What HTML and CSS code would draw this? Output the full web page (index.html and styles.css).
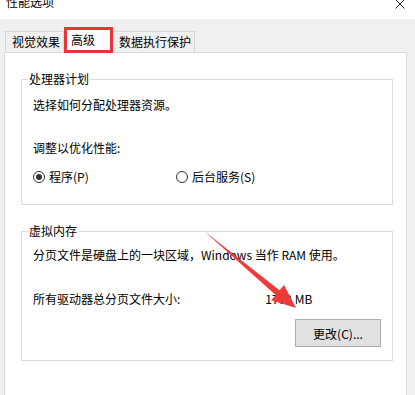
FILE: index.html
```html
<!DOCTYPE html>
<html lang="zh-CN">
<head>
  <meta charset="UTF-8" />
  <title>性能选项</title>
  <link rel="stylesheet" href="styles.css">
</head>
<body>
  <div class="titlebar">
    <span class="title">性能选项</span>
    <svg class="close" width="10" height="10" viewBox="0 0 10 10">
      <path d="M0.5 0.5 L9.5 9.5 M9.5 0.5 L0.5 9.5" stroke="#222" stroke-width="1" fill="none"/>
    </svg>
  </div>

  <div class="tabs">
    <div class="tab">视觉效果</div>
    <div class="tab active">高级</div>
    <div class="tab">数据执行保护</div>
  </div>

  <div class="panel">
    <fieldset class="group">
      <legend>处理器计划</legend>
      <p class="line first">选择如何分配处理器资源。</p>
      <p class="line second">调整以优化性能:</p>
      <div class="radios">
        <label class="radio checked"><span class="dot"></span>程序(P)</label>
        <label class="radio"><span class="dot"></span>后台服务(S)</label>
      </div>
    </fieldset>

    <fieldset class="group vm">
      <legend>虚拟内存</legend>
      <p class="line first">分页文件是硬盘上的一块区域，Windows 当作 RAM 使用。</p>
      <div class="line size-row">
        <span>所有驱动器总分页文件大小:</span>
        <span class="size">1792 MB</span>
      </div>
      <div class="actions">
        <button class="btn">更改(C)...</button>
      </div>
    </fieldset>
  </div>

  <!-- annotation arrow drawn over the dialog -->
  <svg class="arrow" width="415" height="395" viewBox="0 0 415 395">
    <polygon points="204,231 279.5,290.3 284,284.9 296,308 271.2,300.3 275.7,294.9" fill="#f03a3a"/>
  </svg>
</body>
</html>
```

FILE: styles.css
```css
body {
  margin: 0;
  background: #f0f0f0;
  font-family: "Noto Sans CJK SC", "Noto Sans", sans-serif;
  font-size: 12px;
  color: #000;
  width: 415px;
  height: 395px;
  overflow: hidden;
  position: relative;
}

.titlebar {
  height: 19px;
  background: #fff;
  position: relative;
  overflow: hidden;
}

.title {
  display: block;
  margin: -6px 0 0 6px;
  line-height: 16px;
}

.close {
  position: absolute;
  top: -1px;
  right: 10px;
}

.tabs {
  display: flex;
  margin-top: 11px;
  padding-left: 5px;
  height: 22px;
  align-items: flex-end;
}

.tab {
  height: 21px;
  line-height: 20px;
  padding: 0 3px 0 6px;
  border: 1px solid #d9d9d9;
  border-bottom: none;
  background: #f0f0f0;
  box-sizing: border-box;
}

.tab.active {
  height: 26px;
  margin: 0 -1px 0 0;
  padding: 0 15px 0 4px;
  background: #fff;
  border: 3px solid #e8353a;
  line-height: 20px;
  position: relative;
  top: 1px;
  z-index: 1;
}

.panel {
  margin: 0 8px 0 4px;
  height: 360px;
  background: #fff;
  border: 1px solid #d9d9d9;
  box-sizing: border-box;
  padding: 18px 13px 0 16px;
}

.group {
  margin: 0;
  padding: 0 11px 19px 11px;
  border: 1px solid #dcdcdc;
}

.group legend {
  margin-left: -5px;
  padding: 0 1px;
  line-height: 16px;
}

.group.vm {
  margin-top: 18px;
  padding-bottom: 13px;
}

.line {
  margin: 0;
  line-height: 16px;
  white-space: nowrap;
}

.line.first {
  margin-top: 10px;
}

.vm .line.first {
  margin-top: 8px;
}

.line.second {
  margin-top: 27px;
}

.radios {
  display: flex;
  margin-top: 13px;
  line-height: 16px;
}

.radio {
  display: flex;
  align-items: center;
  width: 143px;
}

.dot {
  width: 12px;
  height: 12px;
  border: 1px solid #333;
  border-radius: 50%;
  box-sizing: border-box;
  margin-right: 4px;
  position: relative;
}

.radio.checked .dot::after {
  content: "";
  position: absolute;
  left: 2px;
  top: 2px;
  width: 6px;
  height: 6px;
  border-radius: 50%;
  background: #333;
}

.size-row {
  display: flex;
  margin-top: 28px;
}

.size {
  margin-left: 85px;
}

.actions {
  display: flex;
  justify-content: flex-end;
  margin-top: 12px;
}

.btn {
  width: 86px;
  height: 28px;
  background: #e1e1e1;
  border: 1px solid #adadad;
  font-family: inherit;
  font-size: 12px;
  color: #000;
  padding: 0;
}

.arrow {
  position: absolute;
  left: 0;
  top: 0;
  pointer-events: none;
}
```
